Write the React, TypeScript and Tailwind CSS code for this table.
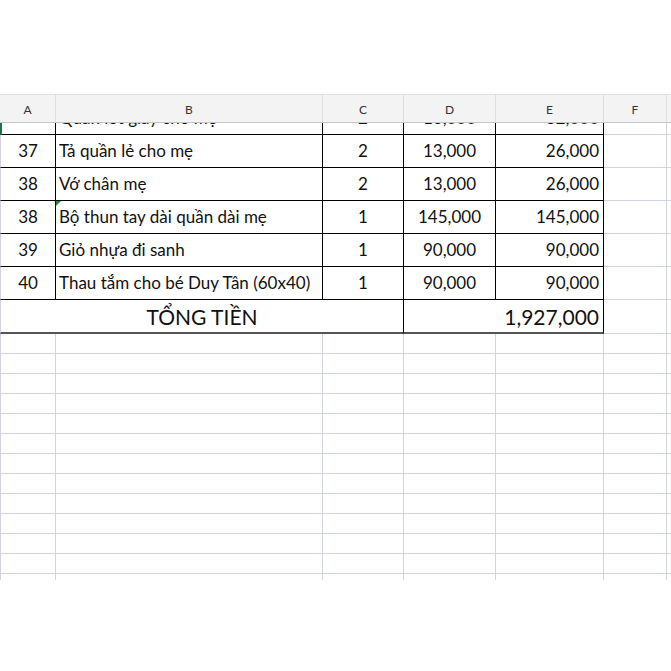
import React from 'react';

const BLACK = 'border-black';
const GRID = 'border-[#d0d4df]';

type Row = { a: string; b: string; c: string; d: string; e: string; flag?: boolean };

const rows: Row[] = [
  { a: '37', b: 'Tả quần lẻ cho mẹ', c: '2', d: '13,000', e: '26,000' },
  { a: '38', b: 'Vớ chân mẹ', c: '2', d: '13,000', e: '26,000' },
  { a: '38', b: 'Bộ thun tay dài quần dài mẹ', c: '1', d: '145,000', e: '145,000', flag: true },
  { a: '39', b: 'Giỏ nhựa đi sanh', c: '1', d: '90,000', e: '90,000' },
  { a: '40', b: 'Thau tắm cho bé Duy Tân (60x40)', c: '1', d: '90,000', e: '90,000' },
];

function DataRow({ row }: { row: Row }) {
  return (
    <div className="flex h-[33px] text-[17px] text-[#111] leading-[31px]">
      <div className={`w-[56px] shrink-0 border-l border-r border-b ${BLACK} border-l-[#d0d4df] text-center`}>{row.a}</div>
      <div className={`relative w-[267px] shrink-0 border-r border-b ${BLACK} pl-[3px] whitespace-nowrap`}>
        {row.flag && (
          <span className="absolute left-0 top-0 w-0 h-0 border-t-[5px] border-r-[5px] border-t-[#1e8c3a] border-r-transparent" />
        )}
        {row.b}
      </div>
      <div className={`w-[81px] shrink-0 border-r border-b ${BLACK} text-center`}>{row.c}</div>
      <div className={`w-[92px] shrink-0 border-r border-b ${BLACK} text-center`}>{row.d}</div>
      <div className={`w-[108px] shrink-0 border-r border-b ${BLACK} text-right pr-[4px]`}>{row.e}</div>
      <div className={`w-[63px] shrink-0 border-r border-b ${GRID}`} />
      <div className={`flex-1 border-b ${GRID}`} />
    </div>
  );
}

function EmptyRow({ last }: { last?: boolean }) {
  const b = last ? '' : 'border-b';
  return (
    <div className={`flex ${last ? 'h-[6px]' : 'h-[20px]'}`}>
      <div className={`w-[56px] shrink-0 border-l border-r ${b} ${GRID}`} />
      <div className={`w-[267px] shrink-0 border-r ${b} ${GRID}`} />
      <div className={`w-[81px] shrink-0 border-r ${b} ${GRID}`} />
      <div className={`w-[92px] shrink-0 border-r ${b} ${GRID}`} />
      <div className={`w-[108px] shrink-0 border-r ${b} ${GRID}`} />
      <div className={`w-[63px] shrink-0 border-r ${b} ${GRID}`} />
      <div className={`flex-1 ${b} ${GRID}`} />
    </div>
  );
}

const headers = [
  { l: 'A', w: 'w-[56px]' },
  { l: 'B', w: 'w-[267px]' },
  { l: 'C', w: 'w-[81px]' },
  { l: 'D', w: 'w-[92px]' },
  { l: 'E', w: 'w-[108px]' },
  { l: 'F', w: 'w-[63px]' },
];

export default function App() {
  return (
    <div className="w-[671px] h-[671px] bg-white overflow-hidden font-['Lato','Liberation_Sans',sans-serif]">
      <div className="h-[94px] bg-white" />

      {/* column headers */}
      <div className="relative z-10 flex h-[29px] bg-[#f3f3f3] border-t border-b border-t-[#e0e0e0] border-b-[#c6c6c6] text-[12px] text-[#333]">
        {headers.map((h) => (
          <div key={h.l} className={`${h.w} shrink-0 border-r border-[#dedede] flex items-end justify-center pb-[3px]`}>
            {h.l}
          </div>
        ))}
        <div className="flex-1" />
      </div>

      {/* row scrolled mostly under the header */}
      <div className="relative h-[12px] overflow-hidden">
        <span className="absolute left-0 top-0 w-[2px] h-[12px] bg-[#217346] z-10" />
        <div className="-mt-[21px]">
          <DataRow row={{ a: '', b: 'Quần lót giấy cho mẹ', c: '2', d: '16,000', e: '32,000' }} />
        </div>
      </div>

      {rows.map((r, i) => (
        <DataRow key={i} row={r} />
      ))}

      {/* total */}
      <div className="flex h-[34px] text-[21px] text-[#111] leading-[32px] pt-px">
        <div className="w-[404px] shrink-0 -mt-px pt-px border-l border-l-[#d0d4df] border-r border-r-black border-b-2 border-b-[#555] text-center">
          TỔNG TIỀN
        </div>
        <div className="w-[200px] shrink-0 -mt-px pt-px border-r border-r-black border-b-2 border-b-[#555] text-right pr-[4px]">
          1,927,000
        </div>
        <div className={`w-[63px] shrink-0 -mt-px border-r border-b ${GRID}`} />
        <div className={`flex-1 -mt-px border-b ${GRID}`} />
      </div>

      {Array.from({ length: 12 }).map((_, i) => (
        <EmptyRow key={i} />
      ))}
      <EmptyRow last />
    </div>
  );
}
